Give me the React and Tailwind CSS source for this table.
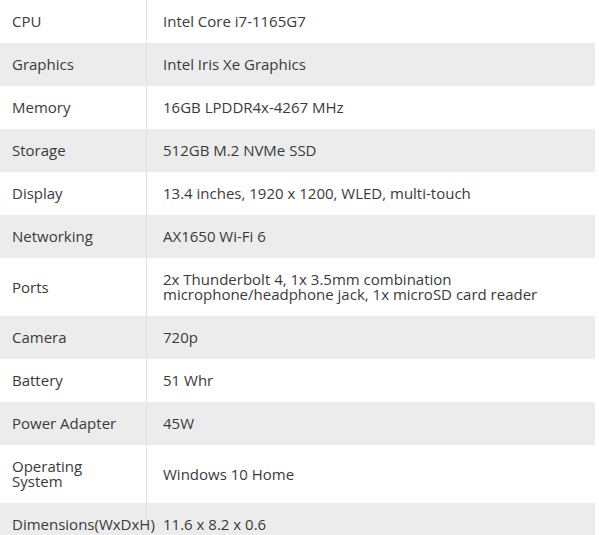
import React from "react";

const specs = [
  ["CPU", "Intel Core i7-1165G7"],
  ["Graphics", "Intel Iris Xe Graphics"],
  ["Memory", "16GB LPDDR4x-4267 MHz"],
  ["Storage", "512GB M.2 NVMe SSD"],
  ["Display", "13.4 inches, 1920 x 1200, WLED, multi-touch"],
  ["Networking", "AX1650 Wi-Fi 6"],
  [
    "Ports",
    "2x Thunderbolt 4, 1x 3.5mm combination microphone/headphone jack, 1x microSD card reader",
  ],
  ["Camera", "720p"],
  ["Battery", "51 Whr"],
  ["Power Adapter", "45W"],
  ["Operating System", "Windows 10 Home"],
  ["Dimensions(WxDxH)", "11.6 x 8.2 x 0.6"],
];

const App = () => {
  return (
    <div className="min-h-screen bg-white font-['Open_Sans',sans-serif] text-[15px] leading-[15px] text-[#3a3a3a]">
      <div className="w-[595px]">
        {specs.map(([label, value], i) => (
          <div
            key={label}
            className={`flex ${i % 2 === 1 ? "bg-[#ececec]" : "bg-white"}`}>
            <div className="relative z-10 w-[146px] shrink-0 flex items-center pl-3 pr-[20px] py-[14px]">
              <span>{label}</span>
            </div>
            <div className="flex-1 flex items-center border-l border-[#e2e2e2] pl-4 pr-4 py-[14px]">
              <span>{value}</span>
            </div>
          </div>
        ))}
      </div>
    </div>
  );
};

export default App;
